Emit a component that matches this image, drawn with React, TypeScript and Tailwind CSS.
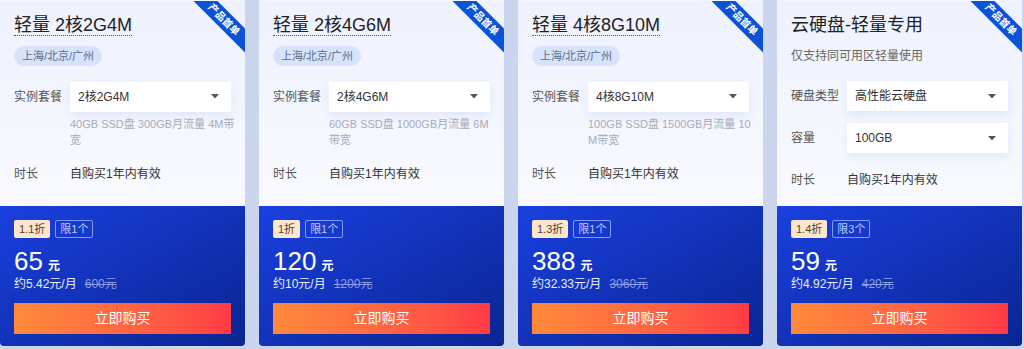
const plans = [
  {
    title: "轻量 2核2G4M",
    underline: true,
    region: "上海/北京/广州",
    rows: [{ label: "实例套餐", value: "2核2G4M", desc: "40GB SSD盘 300GB月流量 4M带宽" }],
    discount: "1.1折",
    limit: "限1个",
    price: "65",
    monthly: "约5.42元/月",
    original: "600元",
  },
  {
    title: "轻量 2核4G6M",
    underline: true,
    region: "上海/北京/广州",
    rows: [{ label: "实例套餐", value: "2核4G6M", desc: "60GB SSD盘 1000GB月流量 6M带宽" }],
    discount: "1折",
    limit: "限1个",
    price: "120",
    monthly: "约10元/月",
    original: "1200元",
  },
  {
    title: "轻量 4核8G10M",
    underline: true,
    region: "上海/北京/广州",
    rows: [{ label: "实例套餐", value: "4核8G10M", desc: "100GB SSD盘 1500GB月流量 10M带宽" }],
    discount: "1.3折",
    limit: "限1个",
    price: "388",
    monthly: "约32.33元/月",
    original: "3060元",
  },
  {
    title: "云硬盘-轻量专用",
    underline: false,
    subtitle: "仅支持同可用区轻量使用",
    rows: [
      { label: "硬盘类型", value: "高性能云硬盘" },
      { label: "容量", value: "100GB" },
    ],
    discount: "1.4折",
    limit: "限3个",
    price: "59",
    monthly: "约4.92元/月",
    original: "420元",
  },
]

type Row = { label: string; value: string; desc?: string }

function Select({ value }: { value: string }) {
  return (
    <div className="w-[161px] h-[30px] bg-white flex items-center justify-between pl-2 pr-[12px] shadow-[0_4px_10px_rgba(90,120,200,0.12)]">
      <span className="text-[12px] text-[#333]">{value}</span>
      <svg width="8" height="5" viewBox="0 0 8 5">
        <path d="M0 0h8L4 4.5z" fill="#555" />
      </svg>
    </div>
  )
}

function PlanCard({ plan }: { plan: (typeof plans)[number] }) {
  const rows: Row[] = plan.rows
  return (
    <div className="relative w-[245px] h-[346px] flex flex-col rounded-b-[4px] overflow-hidden border-t border-white/80">
      {/* top half */}
      <div className="h-[205px] px-[14px] pt-[13px] bg-gradient-to-b from-[#eef2fe] to-[#f9fafe]">
        <div>
          <span
            className={
              "inline-block text-[18px] leading-[20px] text-[#222] border-b border-dotted " +
              (plan.underline ? "border-[#555]" : "border-transparent")
            }
          >
            {plan.title}
          </span>
        </div>
        {plan.region ? (
          <div className="mt-[8px] inline-flex h-5 items-center px-[8px] rounded-full bg-[#d7e3fb] text-[11px] text-[#5b6b8c]">
            {plan.region}
          </div>
        ) : (
          <div className="mt-[8px] h-5 flex items-center text-[12px] text-[#666]">{plan.subtitle}</div>
        )}

        <div className="mt-[15px] flex flex-col gap-[12px]">
          {rows.map((r) => (
            <div key={r.label}>
              <div className="flex items-center">
                <span className="w-[56px] text-[12px] text-[#555]">{r.label}</span>
                <Select value={r.value} />
              </div>
              {r.desc && (
                <p className="ml-[56px] mt-[4px] w-[165px] text-[11px] leading-[16px] text-[#a6abb8] break-all">
                  {r.desc}
                </p>
              )}
            </div>
          ))}
        </div>

        <div className={"flex items-center leading-5 " + (plan.region ? "mt-[16px]" : "mt-[17px]")}>
          <span className="w-[56px] text-[12px] text-[#555]">时长</span>
          <span className="text-[12px] text-[#333]">自购买1年内有效</span>
        </div>
      </div>

      {/* bottom half */}
      <div className="flex-1 px-[14px] pt-[14px] bg-gradient-to-br from-[#1a40e0] to-[#0a2592]">
        <div className="flex gap-[5px]">
          <span className="h-[18px] px-[5px] flex items-center rounded-[2px] bg-[#fde6cc] text-[11px] text-[#5a3d2b]">
            {plan.discount}
          </span>
          <span className="h-[18px] px-[4px] flex items-center rounded-[2px] border border-[#7f9bff] text-[11px] text-[#bccbff]">
            {plan.limit}
          </span>
        </div>
        <div className="mt-[8px] flex items-baseline text-white">
          <span className="text-[26px] leading-[30px]">{plan.price}</span>
          <span className="ml-[5px] text-[12px] font-bold">元</span>
        </div>
        <div className="flex items-center text-[12px] leading-[16px]">
          <span className="text-[#e8ecff]">{plan.monthly}</span>
          <span className="ml-[8px] line-through text-[#8e9fe6]">{plan.original}</span>
        </div>
        <button className="mt-[11px] w-full h-[31px] bg-gradient-to-r from-[#ff8a3a] to-[#ff3a46] text-white text-[14px]">
          立即购买
        </button>
      </div>

      {/* ribbon */}
      <div className="absolute top-[10px] right-[-19px] w-[80px] h-[17px] rotate-45 bg-[#0a52d6] flex items-center justify-center text-[10px] font-bold text-white">
        产品首单
      </div>
    </div>
  )
}

export default function App() {
  return (
    <div
      className="w-[1024px] h-[349px] bg-[#cbd5ee] flex gap-[14px] overflow-hidden"
      style={{ fontFamily: '"Liberation Sans", "Noto Sans CJK SC", sans-serif' }}
    >
      {plans.map((p) => (
        <PlanCard key={p.title} plan={p} />
      ))}
    </div>
  )
}
